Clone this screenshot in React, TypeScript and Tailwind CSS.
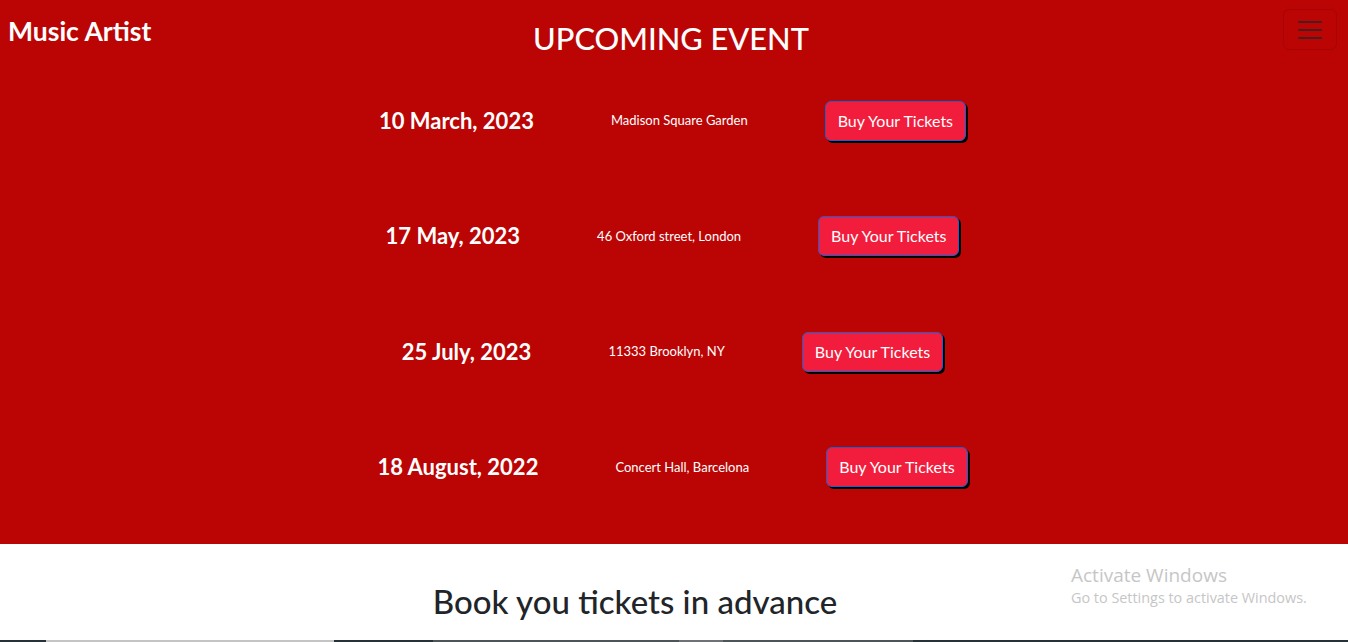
import React from 'react';

interface EventRow {
  date: string;
  venue: string;
}

const events: EventRow[] = [
  { date: '10 March, 2023', venue: 'Madison Square Garden' },
  { date: '17 May, 2023', venue: '46 Oxford street, London' },
  { date: '25 July, 2023', venue: '11333 Brooklyn, NY' },
  { date: '18 August, 2022', venue: 'Concert Hall, Barcelona' },
];

function Toggler() {
  return (
    <button className="justify-self-end w-[54px] h-[41px] flex items-center justify-center rounded-[6px] border border-black/10">
      <svg width="30" height="30" viewBox="0 0 30 30">
        <path
          d="M4 7h22M4 15h22M4 23h22"
          stroke="rgba(33,37,41,0.75)"
          strokeWidth="2"
          strokeLinecap="round"
          strokeMiterlimit="10"
        />
      </svg>
    </button>
  );
}

export default function App() {
  return (
    <div className="relative min-h-[642px] bg-white font-['Lato','Noto_Sans',sans-serif] overflow-hidden">
      <section className="bg-[#bb0505] pb-[19px]">
        <header className="grid grid-cols-[1fr_auto_1fr] items-start h-[63px] pt-[9px] pl-2 pr-[11px]">
          <span className="text-white text-[26.5px] font-bold leading-none mt-[9px]">Music Artist</span>
          <h2 className="text-white text-[30.8px] font-medium leading-none mt-[15px] pr-[3px]">UPCOMING EVENT</h2>
          <Toggler />
        </header>

        {events.map(ev => (
          <div key={ev.date} className="h-[115.5px] flex items-center justify-center gap-[77px] pr-[3px]">
            <h4 className="text-white text-[22px] font-bold leading-none">{ev.date}</h4>
            <span className="text-white text-[13px] leading-none">{ev.venue}</span>
            <button className="text-white text-[16px] leading-[24px] px-3 py-[7px] rounded-[6px] bg-[#f21d3c] border border-[#1f5fd6] shadow-[2px_2px_0_#000]">
              Buy Your Tickets
            </button>
          </div>
        ))}
      </section>

      <section className="h-[96px] flex justify-center pr-[78px] pt-[41px]">
        <h2 className="text-[#212529] text-[33px] font-medium leading-none">Book you tickets in advance</h2>
      </section>

      <div className="flex h-[2px]">
        <div className="w-[46px] bg-[#263238]" />
        <div className="w-[288px] bg-[#c4c4c4]" />
        <div className="w-[99px] bg-[#263238]" />
        <div className="w-[246px] bg-[#4e5558]" />
        <div className="w-[44px] bg-[#6f7275]" />
        <div className="w-[190px] bg-[#4e5558]" />
        <div className="flex-1 bg-[#263238]" />
      </div>

      <div className="absolute left-[1071px] top-[563px] text-[#c6c6c6] font-['Open_Sans',sans-serif] pointer-events-none">
        <div className="text-[19px] leading-[24px]">Activate Windows</div>
        <div className="text-[14.4px] leading-[20px] mt-[1px]">Go to Settings to activate Windows.</div>
      </div>
    </div>
  );
}
